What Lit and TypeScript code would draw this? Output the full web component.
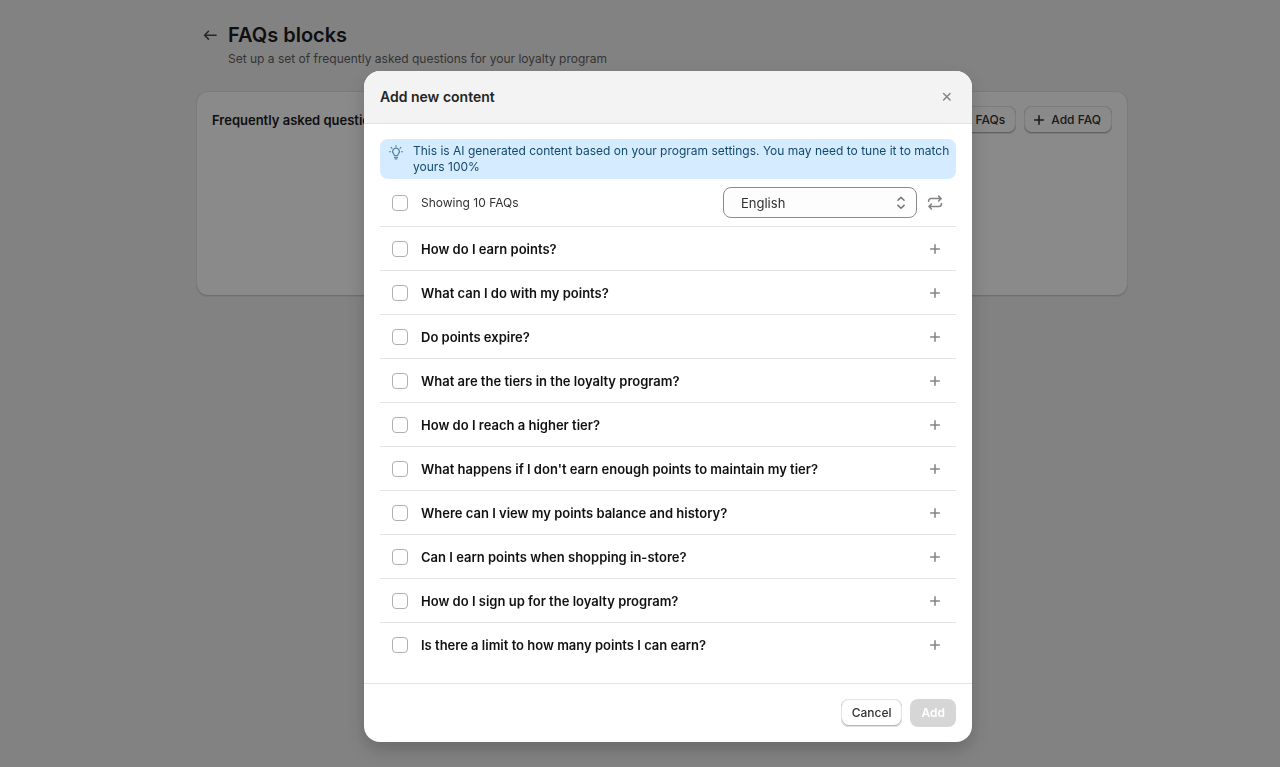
import { LitElement, html, css, svg } from "lit";
import { customElement, property } from "lit/decorators.js";

const QUESTIONS = [
  "How do I earn points?",
  "What can I do with my points?",
  "Do points expire?",
  "What are the tiers in the loyalty program?",
  "How do I reach a higher tier?",
  "What happens if I don't earn enough points to maintain my tier?",
  "Where can I view my points balance and history?",
  "Can I earn points when shopping in-store?",
  "How do I sign up for the loyalty program?",
  "Is there a limit to how many points I can earn?",
];

const ICONS: Record<string, unknown> = {
  back: svg`<path d="M16.800 10.200H4M8.300 5.800 3.900 10.200l4.400 4.400" />`,
  plus: svg`<path d="M10 5.200v9.600M5.200 10h9.600" />`,
  close: svg`<path d="m6.200 6.200 7.200 7.200M13.400 6.200l-7.200 7.200" />`,
  repeat: svg`<path d="M2.900 8.400V7.800a2.700 2.700 0 0 1 2.700-2.700h11M14 2.400l2.800 2.700L14 7.800M17.100 10.600v.600a2.700 2.700 0 0 1-2.700 2.700h-11M6 11.200l-2.800 2.700L6 16.600" />`,
  bulb: svg`<path d="M8.100 13.900c0-.900-.400-1.400-.900-2a3.700 3.700 0 1 1 5.600 0c-.500.600-.900 1.100-.900 2zM8.300 16h3.400M9 17.700h2M10 3v1.200M4.600 4.900l.900.900M15.400 4.900l-.900.900M2.700 9.700h1.200M16.100 9.700h1.200" />`,
  select: svg`<path d="M6.600 7 10 3.700 13.400 7M6.600 12.600l3.400 3.300 3.400-3.300" />`,
};

@customElement("ui-icon")
class UiIcon extends LitElement {
  @property() name = "plus";

  static styles = css`
    :host {
      display: inline-flex;
      flex: none;
      width: 18px;
      height: 18px;
    }
    .glyph {
      width: 100%;
      height: 100%;
      fill: none;
      stroke: currentColor;
      stroke-width: 1.7;
      stroke-linecap: round;
      stroke-linejoin: round;
    }
    .glyph.bulb {
      stroke-width: 1.300;
    }
  `;

  render() {
    return html`<svg class="glyph ${this.name}" viewBox="0 0 20 20" aria-hidden="true">${ICONS[this.name]}</svg>`;
  }
}

@customElement("app-root")
class AppRoot extends LitElement {
  static styles = css`
    :host {
      display: block;
      min-height: 100vh;
      background: #f1f1f1;
      color: #303030;
      font: 400 12px/16px Inter, sans-serif;
    }
    * {
      box-sizing: border-box;
    }
    h1,
    h2,
    p,
    ul {
      margin: 0;
      padding: 0;
    }
    button,
    select {
      font: inherit;
      color: inherit;
    }
    .page {
      padding: 23px 0 0 44px;
    }
    .content {
      max-width: 932px;
      margin: 0 auto;
    }
    .heading {
      display: flex;
      align-items: flex-start;
      gap: 8px;
      padding-left: 4px;
    }
    .icon-button {
      display: inline-flex;
      padding: 0;
      border: 0;
      background: none;
      color: #858585;
    }
    .back {
      padding: 3px 1px;
      color: #4a4a4a;
    }
    .page-title {
      font-size: 20px;
      line-height: 24px;
      font-weight: 600;
      color: #1c1c1c;
    }
    .subtitle {
      margin-top: 4px;
      color: #616161;
    }
    .card {
      min-height: 206px;
      margin-top: 24px;
      padding: 15px 16px;
      border-radius: 12px;
      background: #fff;
      box-shadow: inset 0 0 0 1px #e3e3e3, inset 0 -1px 0 1px #ccc;
    }
    .card-head {
      display: flex;
      justify-content: space-between;
      align-items: center;
    }
    .card-title {
      font-size: 13px;
      line-height: 20px;
      font-weight: 600;
      color: #1c1c1c;
    }
    .actions {
      display: flex;
      gap: 8px;
    }
    .btn {
      display: inline-flex;
      align-items: center;
      gap: 3px;
      height: 28px;
      padding: 0 11px;
      border: 0;
      border-radius: 8px;
      background: #fff;
      font-weight: 500;
      box-shadow: inset 0 0 0 1px #e3e3e3, inset 0 -1px 0 1px #b5b5b5;
    }
    .btn.with-icon {
      padding-left: 6px;
    }
    .btn:disabled {
      background: #d6d6d6;
      color: #fff;
      font-weight: 600;
      box-shadow: none;
    }
    .overlay {
      position: fixed;
      inset: 0;
      display: flex;
      align-items: center;
      justify-content: center;
      padding: 46px 0 0 56px;
      background: rgba(0, 0, 0, 0.46);
    }
    .modal {
      width: 100%;
      max-width: 608px;
      border-radius: 16px;
      overflow: hidden;
      background: #fff;
      box-shadow: 0 8px 20px rgba(0, 0, 0, 0.2);
    }
    .modal-head {
      display: flex;
      justify-content: space-between;
      align-items: center;
      padding: 16px;
      border-bottom: 1px solid #e3e3e3;
      background: #f3f3f3;
    }
    .modal-title {
      font-size: 14px;
      line-height: 20px;
      font-weight: 600;
      color: #242424;
    }
    .modal-body {
      padding: 15px 16px 17px;
    }
    .banner {
      display: flex;
      gap: 8px;
      padding: 4px 0 4px 7px;
      border-radius: 8px;
      background: #d5ebff;
      color: #124a6b;
    }
    .banner-icon {
      color: #5583a1;
    }
    .row {
      display: flex;
      align-items: center;
      gap: 12px;
      min-height: 43px;
      padding: 0 12px;
    }
    .row + .row {
      border-top: 1px solid #e3e3e3;
      min-height: 44px;
    }
    .toolbar {
      min-height: 48px;
      border-bottom: 1px solid #e3e3e3;
    }
    .check-label {
      display: flex;
      flex: 1;
      align-items: center;
      gap: 13px;
    }
    .check {
      appearance: none;
      flex: none;
      width: 16px;
      height: 16px;
      margin: 0;
      border: 1px solid #b0b0b0;
      border-radius: 4px;
      background: #fff;
    }
    .check:checked {
      background: #303030;
    }
    .list {
      list-style: none;
    }
    .question {
      font-size: 13px;
      line-height: 20px;
      font-weight: 600;
      color: #111;
    }
    .language {
      position: relative;
      display: flex;
      width: 194px;
      margin-right: -3px;
    }
    .language-select {
      appearance: none;
      width: 100%;
      height: 31px;
      padding: 0 32px 0 17px;
      border: 1px solid #8a8a8a;
      border-radius: 8px;
      background: #fdfdfd;
      font-size: 13px;
    }
    .language-icon {
      position: absolute;
      right: 7px;
      top: 7px;
      color: #777;
      pointer-events: none;
    }
    .modal-foot {
      display: flex;
      justify-content: flex-end;
      gap: 8px;
      padding: 15px 16px;
      border-top: 1px solid #e3e3e3;
    }
  `;

  render() {
    return html`
      <main class="page">
        <div class="content">
          <header class="heading">
            <button class="icon-button back" aria-label="Back"><ui-icon name="back"></ui-icon></button>
            <div>
              <h1 class="page-title">FAQs blocks</h1>
              <p class="subtitle">Set up a set of frequently asked questions for your loyalty program</p>
            </div>
          </header>
          <section class="card">
            <div class="card-head">
              <h2 class="card-title">Frequently asked questions</h2>
              <div class="actions">
                <button class="btn">Generate FAQs</button>
                <button class="btn with-icon"><ui-icon name="plus"></ui-icon>Add FAQ</button>
              </div>
            </div>
          </section>
        </div>
      </main>

      <div class="overlay">
        <div class="modal" role="dialog" aria-modal="true" aria-labelledby="modal-title">
          <header class="modal-head">
            <h2 class="modal-title" id="modal-title">Add new content</h2>
            <button class="icon-button" aria-label="Close"><ui-icon name="close"></ui-icon></button>
          </header>
          <div class="modal-body">
            <div class="banner">
              <ui-icon class="banner-icon" name="bulb"></ui-icon>
              <p>
                This is AI generated content based on your program settings. You may need to tune it to
                match yours 100%
              </p>
            </div>
            <div class="row toolbar">
              <label class="check-label">
                <input class="check" type="checkbox" />
                <span>Showing 10 FAQs</span>
              </label>
              <div class="language">
                <select class="language-select" aria-label="Language">
                  <option>English</option>
                </select>
                <ui-icon class="language-icon" name="select"></ui-icon>
              </div>
              <button class="icon-button" aria-label="Regenerate"><ui-icon name="repeat"></ui-icon></button>
            </div>
            <ul class="list">
              ${QUESTIONS.map(
                (q) => html`
                  <li class="row">
                    <label class="check-label">
                      <input class="check" type="checkbox" />
                      <span class="question">${q}</span>
                    </label>
                    <button class="icon-button" aria-label="Show answer"><ui-icon name="plus"></ui-icon></button>
                  </li>
                `,
              )}
            </ul>
          </div>
          <footer class="modal-foot">
            <button class="btn">Cancel</button>
            <button class="btn" disabled>Add</button>
          </footer>
        </div>
      </div>
    `;
  }
}
